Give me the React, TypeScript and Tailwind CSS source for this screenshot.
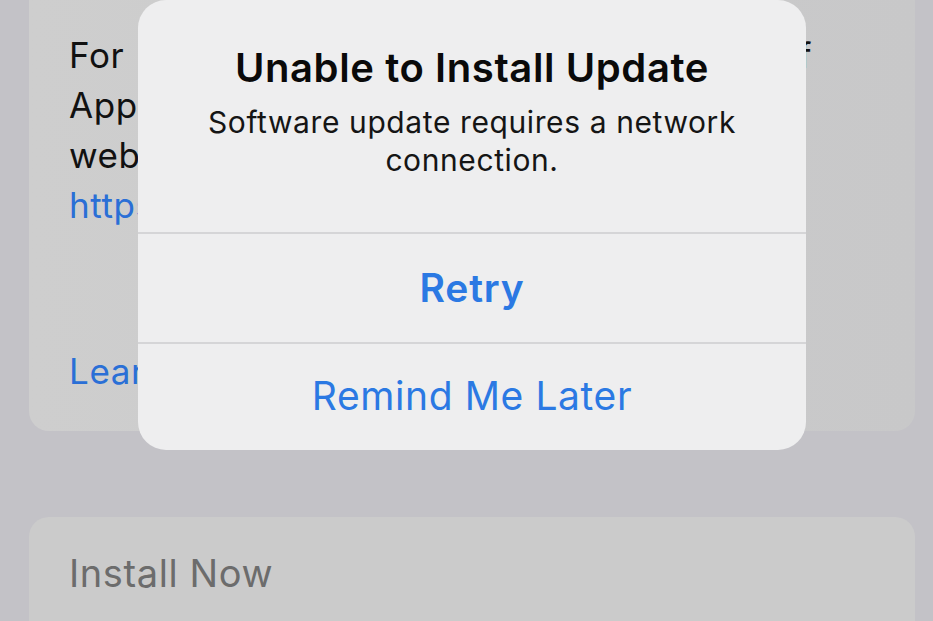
import React from "react";

export default function App() {
  const font = { fontFamily: "Inter, 'Noto Sans', sans-serif" };
  return (
    <div
      className="relative w-[933px] h-[621px] overflow-hidden bg-[#c3c2c7]"
      style={font}
    >
      <div className="flex flex-col pl-[29px] pr-[18px]">
        <div className="h-[431px] rounded-b-[20px] bg-gradient-to-r from-[#cecece] to-[#c8c8c9] pl-[40px] pr-[30px] pt-[30px] overflow-hidden">
          <div className="text-[35px] leading-[50px] text-[#111] tracking-[0.6px] whitespace-nowrap">
            <div className="w-[743px] [text-align-last:justify]">
              For information on the security content of
            </div>
            <div>Apple software updates, please visit this</div>
            <div>website:</div>
            <div className="text-[#2a6fd6]">https://support.apple.com/kb/HT201222</div>
            <div className="mt-[116px] text-[#2a6fd6]">Learn more...</div>
          </div>
        </div>
        <div className="mt-[86px] h-[140px] rounded-[20px] bg-[#cbcbcb] pl-[40px] pt-[33px]">
          <div className="text-[38px] leading-[46px] text-[#6c6c6c] tracking-[0.6px]">
            Install Now
          </div>
        </div>
      </div>

      <div className="absolute left-[138px] top-0 w-[668px] h-[450px] rounded-[28px] bg-[#eeeeef] flex flex-col">
        <div className="h-[232px] flex flex-col items-center pt-[46px] text-center">
          <div className="text-[40px] leading-[44px] font-semibold text-[#0a0a0a] tracking-[0.6px]">
            Unable to Install Update
          </div>
          <div className="mt-[13px] text-[30px] leading-[38px] text-[#151515] tracking-[0.6px] w-[600px]">
            Software update requires a network connection.
          </div>
        </div>
        <div className="h-[2px] bg-[#d5d5d7]" />
        <div className="h-[108px] flex items-center justify-center text-[39px] font-semibold text-[#2b79e3] tracking-[0.8px]">
          Retry
        </div>
        <div className="h-[2px] bg-[#d5d5d7]" />
        <div className="flex-1 flex items-center justify-center text-[39px] text-[#2b79e3] tracking-[0.6px] pb-[2px]">
          Remind Me Later
        </div>
      </div>
    </div>
  );
}
